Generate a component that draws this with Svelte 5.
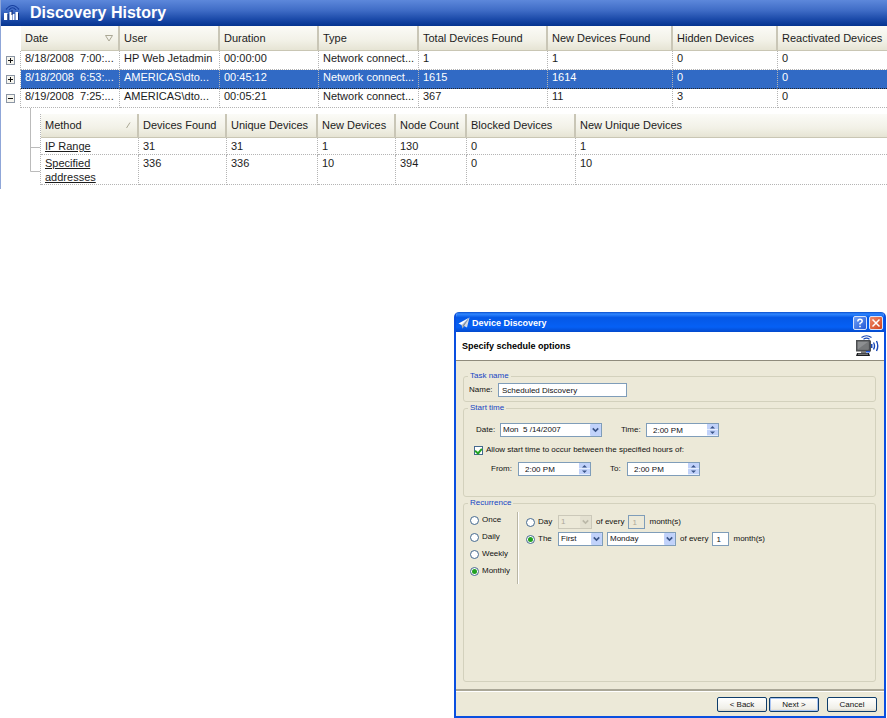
<script lang="ts">
	const columns = [
		{ label: "Date", width: 99, sort: "desc" },
		{ label: "User", width: 100 },
		{ label: "Duration", width: 99 },
		{ label: "Type", width: 100 },
		{ label: "Total Devices Found", width: 129 },
		{ label: "New Devices Found", width: 125 },
		{ label: "Hidden Devices", width: 105 },
		{ label: "Reactivated Devices" },
	];

	const runs = [
		["8/18/2008\u00a0 7:00:...", "HP Web Jetadmin", "00:00:00", "Network connect...", "1", "1", "0", "0"],
		["8/18/2008\u00a0 6:53:...", "AMERICAS\\dto...", "00:45:12", "Network connect...", "1615", "1614", "0", "0"],
		["8/19/2008\u00a0 7:25:...", "AMERICAS\\dto...", "00:05:21", "Network connect...", "367", "11", "3", "0"],
	];

	const methodColumns = [
		{ label: "Method", width: 98, sort: "asc" },
		{ label: "Devices Found", width: 88 },
		{ label: "Unique Devices", width: 91 },
		{ label: "New Devices", width: 78 },
		{ label: "Node Count", width: 71 },
		{ label: "Blocked Devices", width: 109 },
		{ label: "New Unique Devices" },
	];

	const methods = [
		["IP Range", "31", "31", "1", "130", "0", "1"],
		["Specified addresses", "336", "336", "10", "394", "0", "10"],
	];

	let selected = $state(1);
	let expanded = $state(2);

	let taskName = $state("Scheduled Discovery");
	let useWindow = $state(true);
	let recurrence = $state("Monthly");
	let monthlyMode = $state("the");
</script>

{#snippet chevron()}
	<svg class="chevron" viewBox="0 0 10 11" aria-hidden="true">
		<rect width="10" height="11" rx="1" />
		<path d="M2.5 4 L5 6.5 L7.5 4" />
	</svg>
{/snippet}

{#snippet timeBox(id, value)}
	<span class="spin">
		<input {id} type="text" {value} />
		<span class="steps">
			<button type="button" aria-label="Up">
				<svg viewBox="0 0 11 6"><path d="M3 4.5 L5.5 2 L8 4.5 Z" /></svg>
			</button>
			<button type="button" aria-label="Down">
				<svg viewBox="0 0 11 6"><path d="M3 1.5 L5.5 4 L8 1.5 Z" /></svg>
			</button>
		</span>
	</span>
{/snippet}

<main>
	<section class="history">
		<header>
			<svg class="logo" viewBox="0 0 18 20" aria-hidden="true">
				<path d="M3 6.5 Q9.500 -1.500 16 6.5 M6 7 Q9.500 2.500 13 7" fill="none" stroke="#173f9f" stroke-width="1.2" />
				<path d="M1 10 h3.5 v7 h-3.5 Z M6.5 9 h2.5 v8 h-2.5 Z M9.500 11 h2 v6 h-2 Z M12.500 9 h2.500 v8 h-2.500 Z" fill="#fff" />
				<path d="M4.5 11 h1 v6 h-1 Z M15 10 h1 v7 h-1 Z M8.500 7 h1 v5 h-1 Z" fill="#10296b" />
			</svg>
			<h1>Discovery History</h1>
		</header>

		<table class="grid">
			<colgroup>
				<col style="width: 20px" />
				{#each columns as col}
					<col style={col.width ? `width: ${col.width}px` : ""} />
				{/each}
			</colgroup>
			<thead>
				<tr>
					<td class="gutter"></td>
					{#each columns as col}
						<th scope="col">
							<div>
								{col.label}
								{#if col.sort}
									<svg class="sort" viewBox="0 0 8 7"><path d="M.5 .5 H7.5 L4 6 Z" /></svg>
								{/if}
							</div>
						</th>
					{/each}
				</tr>
			</thead>
			<tbody>
				{#each runs as run, i}
					<tr class:selected={selected === i} onclick={() => (selected = i)}>
						<td class="gutter">
							<button
								type="button"
								class="toggle"
								aria-label={expanded === i ? "Collapse" : "Expand"}
								onclick={() => (expanded = expanded === i ? -1 : i)}
							>
								<svg viewBox="0 0 9 9">
									<path d="M2 4.5 H7" />
									{#if expanded !== i}<path d="M4.5 2 V7" />{/if}
								</svg>
							</button>
						</td>
						{#each run as cell}
							<td>{cell}</td>
						{/each}
					</tr>
					{#if expanded === i}
						<tr class="detail">
							<td class="gutter"></td>
							<td colspan={columns.length}>
								<div class="branch">
									<svg class="tree" viewBox="0 0 19 76" aria-hidden="true">
										<path d="M9.5 0 V63.5 H19 M9.5 39.5 H19" />
									</svg>
									<table class="grid nested">
										<colgroup>
											{#each methodColumns as col}
												<col style={col.width ? `width: ${col.width}px` : ""} />
											{/each}
										</colgroup>
										<thead>
											<tr>
												{#each methodColumns as col}
													<th scope="col">
														<div>
															{col.label}
															{#if col.sort}
																<svg class="sort" viewBox="0 0 8 7"><path d="M2.5 6 L6 .5" /></svg>
															{/if}
														</div>
													</th>
												{/each}
											</tr>
										</thead>
										<tbody>
											{#each methods as method}
												<tr>
													{#each method as cell, n}
														<td>
															{#if n === 0}<a href="#method">{cell}</a>{:else}{cell}{/if}
														</td>
													{/each}
												</tr>
											{/each}
										</tbody>
									</table>
								</div>
							</td>
						</tr>
					{/if}
				{/each}
			</tbody>
		</table>
	</section>

	<form class="dialog" onsubmit={(e) => e.preventDefault()}>
		<div class="titlebar">
			<svg class="plane" viewBox="0 0 12 12" aria-hidden="true">
				<path d="M11.5 .5 L.5 6.5 L3.5 8 Z" fill="#fff" />
				<path d="M11.5 .5 L3.5 8 L4.5 11.5 L6 9 L9 10.5 Z" fill="#d5dce6" />
				<path d="M11.5 .5 L4.5 8.5 L4.5 11.5 L6 9 Z" fill="#7c8794" />
			</svg>
			<h2>Device Discovery</h2>
			<button type="button" class="caption" aria-label="Help">
				<svg viewBox="0 0 12 12">
					<path d="M3.8 4.5 Q3.8 2.2 6 2.2 Q8.2 2.2 8.2 4.2 Q8.2 5.4 6 6.4 V7.6 M6 8.8 V10.3" />
				</svg>
			</button>
			<button type="button" class="caption close" aria-label="Close">
				<svg viewBox="0 0 12 12"><path d="M2.5 2.5 L9.5 9.5 M9.5 2.5 L2.5 9.5" /></svg>
			</button>
		</div>

		<div class="banner">
			<h3>Specify schedule options</h3>
			<svg class="monitor" viewBox="0 0 24 22" aria-hidden="true">
				<path d="M6.5 2.5 Q11.5 -1 16.500 2.5 M8.500 4.200 Q11.500 2.200 14.500 4.200" fill="none" stroke="#1747b8" stroke-width="1.2" />
				<path d="M1 5 H15 L16 6 V16.5 H1 Z" fill="#4c4e51" />
				<rect x="2.5" y="6.5" width="11" height="8" fill="#8d8f91" />
				<path d="M2.5 14.5 L13.500 6.500 V14.5 Z" fill="#77797b" />
				<path d="M6 16 H11 V18 H6 Z" fill="#777" />
				<path d="M2 18 H14 L15 21 H1 Z" fill="#1d1f22" />
				<path d="M3 19.2 H13" stroke="#bbb" stroke-width=".8" />
				<rect x="11" y="16" width="4" height="1.5" fill="#1d56dc" />
				<path d="M16 9 H17.5 V13 H16 Z" fill="#1747b8" />
				<path d="M18.500 7.500 Q20.500 11 18.500 14.500 M21.500 6 Q24 11 21.500 16" fill="none" stroke="#1747b8" stroke-width="1.400" />
			</svg>
		</div>

		<div class="body">
			<fieldset class="task">
				<legend>Task name</legend>
				<div class="row">
					<label class="name-label" for="task-name">Name:</label>
					<input id="task-name" class="name" type="text" bind:value={taskName} />
				</div>
			</fieldset>

			<fieldset class="start">
				<legend>Start time</legend>
				<div class="row date-row">
					<label class="lead" for="date">Date:</label>
					<span class="drop date">
						<select id="date"><option>Mon&nbsp; 5 /14/2007</option></select>
						{@render chevron()}
					</span>
					<label class="time-label" for="time">Time:</label>
					{@render timeBox("time", "2:00 PM")}
				</div>
				<label class="row window-row">
					<input type="checkbox" bind:checked={useWindow} />
					Allow start time to occur between the specified hours of:
				</label>
				<div class="row hours-row">
					<label class="from-label" for="from">From:</label>
					{@render timeBox("from", "2:00 PM")}
					<label class="to-label" for="to">To:</label>
					{@render timeBox("to", "2:00 PM")}
				</div>
			</fieldset>

			<fieldset class="recurrence">
				<legend>Recurrence</legend>
				<div class="split">
					<div class="modes">
						{#each ["Once", "Daily", "Weekly", "Monthly"] as mode}
							<label>
								<input type="radio" name="recurrence" value={mode} bind:group={recurrence} />
								{mode}
							</label>
						{/each}
					</div>
					<div class="monthly">
						<div class="row">
							<label class="pick">
								<input type="radio" name="monthly" value="day" bind:group={monthlyMode} />
								Day
							</label>
							<span class="drop day" class:off={monthlyMode !== "day"}>
								<select aria-label="Day of month" disabled={monthlyMode !== "day"}><option>1</option></select>
								{@render chevron()}
							</span>
							<label for="day-every">of every</label>
							<input id="day-every" class="count" type="text" value="1" disabled={monthlyMode !== "day"} />
							<span>month(s)</span>
						</div>
						<div class="row">
							<label class="pick">
								<input type="radio" name="monthly" value="the" bind:group={monthlyMode} />
								The
							</label>
							<span class="drop ordinal">
								<select aria-label="Week"><option>First</option></select>
								{@render chevron()}
							</span>
							<span class="drop weekday">
								<select aria-label="Weekday"><option>Monday</option></select>
								{@render chevron()}
							</span>
							<label for="the-every">of every</label>
							<input id="the-every" class="count" type="text" value="1" />
							<span>month(s)</span>
						</div>
					</div>
				</div>
			</fieldset>
		</div>

		<footer>
			<button type="button">&lt; Back</button>
			<button type="submit" class="default">Next &gt;</button>
			<button type="button" class="cancel">Cancel</button>
		</footer>
	</form>
</main>

<style>
	:global(body) {
		margin: 0;
		background: #fff;
	}

	main {
		display: flex;
		flex-direction: column;
		gap: 123px;
		font-family: "Liberation Sans", Arial, sans-serif;
		font-size: 11px;
		color: #1c1c1c;
	}

	main * {
		box-sizing: border-box;
	}

	h1,
	h2,
	h3 {
		margin: 0;
	}

	button,
	input,
	select {
		margin: 0;
		padding: 0;
		font: inherit;
		color: inherit;
	}

	svg {
		display: block;
	}

	/* History grid */
	.history {
		border-left: 1px solid #8fa6d8;
		padding-bottom: 4px;
		overflow: hidden;
	}

	.history header {
		display: flex;
		align-items: center;
		gap: 9px;
		height: 26px;
		padding-left: 2px;
		background: linear-gradient(#5d88db, #3f6cc6 40%, #1a49a8 75%, #04338f);
	}

	.logo {
		width: 18px;
		height: 20px;
	}

	h1 {
		font-size: 16px;
		line-height: 26px;
		color: #fff;
	}

	.grid {
		width: 100%;
		table-layout: fixed;
		border-collapse: separate;
		border-spacing: 0;
	}

	.grid th {
		height: 25px;
		padding: 0 5px 0 4px;
		font-weight: normal;
		text-align: left;
		white-space: nowrap;
		background: linear-gradient(#fbfbf7, #f2f1e7 60%, #e6e4d4);
		border-right: 2px solid #c9c6b6;
		border-bottom: 1px solid #c9c6b4;
	}

	.grid th:last-child {
		border-right: 0;
	}

	.grid th > div {
		display: flex;
		align-items: center;
		justify-content: space-between;
	}

	.sort {
		width: 8px;
		height: 7px;
		fill: none;
		stroke: #aaa794;
	}

	.grid td {
		height: 19px;
		padding: 0 0 0 4px;
		line-height: 15px;
		vertical-align: top;
		white-space: nowrap;
		overflow: hidden;
		border-right: 1px dotted #b4b4b4;
		border-bottom: 1px dotted #b4b4b4;
	}

	.grid td:last-child {
		border-right: 0;
	}

	.grid td.gutter {
		padding: 5px 0 0 5px;
		border-bottom: 0;
	}

	.grid thead td.gutter {
		border-right: 0;
	}

	.selected td:not(.gutter) {
		color: #fff;
		background: #316ac5;
		border-bottom-color: #222;
	}

	.toggle {
		display: block;
		width: 9px;
		height: 9px;
		border: 1px solid #8c96a5;
		background: #f6f5ee;
	}

	.toggle svg {
		width: 9px;
		height: 9px;
		margin: -1px;
		stroke: #111;
	}

	.grid .detail > td {
		padding: 0;
		border: 0;
	}

	.branch {
		display: flex;
	}

	.tree {
		flex: none;
		width: 19px;
		height: 76px;
		fill: none;
		stroke: #bbb;
	}

	.nested {
		flex: 1;
		margin-top: 6px;
		border-left: 1px dotted #b4b4b4;
	}

	.nested th {
		height: 24px;
	}

	.nested td {
		height: 17px;
		padding-top: 1px;
		line-height: 14px;
		white-space: normal;
	}

	.nested a {
		color: #1c1c1c;
	}

	/* Wizard dialog */
	.dialog {
		display: flex;
		flex-direction: column;
		margin: 0 1px 0 454px;
		border: solid #0a4fe0;
		border-width: 0 2px 2px;
		border-radius: 5px 5px 0 0;
		font-size: 8px;
		line-height: 10px;
		color: #111;
		background: #ece9d8;
		overflow: hidden;
	}

	.titlebar {
		display: flex;
		align-items: center;
		gap: 2px;
		height: 20px;
		padding: 1px 1px 0 2px;
		background: linear-gradient(#0a4ecb, #2f86ff 10%, #0558e6 28%, #0560f5 75%, #0349cd);
	}

	.plane {
		width: 12px;
		height: 12px;
	}

	h2 {
		flex: 1;
		font-size: 9px;
		color: #fff;
	}

	.caption {
		width: 14px;
		height: 14px;
		border: 1px solid #d9e4fa;
		border-radius: 2px;
		background: linear-gradient(135deg, #6f9ff5, #2358d6);
	}

	.caption.close {
		background: linear-gradient(135deg, #ef8a6a, #d2431c);
	}

	.caption svg {
		width: 12px;
		height: 12px;
		fill: none;
		stroke: #fff;
		stroke-width: 1.5;
	}

	.banner {
		display: flex;
		align-items: center;
		justify-content: space-between;
		height: 29px;
		padding: 0 5px 0 6px;
		background: #fff;
		border-bottom: 1px solid #8f8b7c;
	}

	h3 {
		font-size: 9px;
		color: #000;
	}

	.monitor {
		width: 24px;
		height: 22px;
	}

	.body {
		display: flex;
		flex-direction: column;
		gap: 1px;
		padding: 10px 8px 7px 7px;
	}

	fieldset {
		min-width: 0;
		margin: 0;
		padding: 0;
		border: 1px solid #d3d1bd;
		border-radius: 3px;
	}

	legend {
		margin-left: 4px;
		padding: 0 2px;
		color: #1545c4;
	}

	.row {
		display: flex;
		align-items: center;
	}

	.task {
		min-height: 31px;
	}

	.task .row {
		padding: 2px 0 3px 5px;
	}

	.name-label {
		width: 29px;
	}

	.dialog input[type="text"] {
		height: 14px;
		padding: 0 3px;
		border: 1px solid #7f9db9;
		background: #fff;
	}

	.dialog input.name {
		width: 129px;
	}

	.start {
		min-height: 94px;
	}

	.date-row {
		padding: 10px 0 0 12px;
	}

	.lead {
		width: 24px;
	}

	.time-label {
		width: 25px;
		margin-left: 19px;
	}

	.window-row {
		gap: 3px;
		padding: 8px 0 0 10px;
	}

	.hours-row {
		padding: 7px 0 0 27px;
	}

	.from-label {
		width: 27px;
	}

	.to-label {
		width: 17px;
		margin-left: 19px;
	}

	.drop {
		position: relative;
		display: block;
	}

	.drop select {
		display: block;
		width: 100%;
		height: 14px;
		padding: 0 12px 0 2px;
		appearance: none;
		border: 1px solid #7f9db9;
		border-radius: 0;
		background: #fff;
		opacity: 1;
	}

	.chevron {
		position: absolute;
		top: 1px;
		right: 1px;
		width: 11px;
		height: 12px;
		pointer-events: none;
	}

	.chevron rect {
		fill: #c1d2fa;
	}

	.chevron path {
		fill: none;
		stroke: #3a5488;
		stroke-width: 1.5;
	}

	.off select {
		color: #aca899;
		background: #ece9d8;
		border-color: #cbc8b9;
	}

	.off .chevron rect {
		fill: #e3e0d0;
	}

	.off .chevron path {
		stroke: #bbb8a8;
	}

	.date {
		width: 102px;
	}

	.spin {
		display: flex;
		width: 73px;
		height: 14px;
		border: 1px solid #7f9db9;
		background: #fff;
	}

	.dialog .spin input {
		flex: 1;
		min-width: 0;
		height: 12px;
		padding-left: 6px;
		border: 0;
	}

	.steps {
		display: flex;
		flex-direction: column;
		width: 11px;
	}

	.steps button {
		width: 11px;
		height: 6px;
		border: 0;
		background: #c1d2fa;
		border-bottom: 1px solid #e6eefd;
	}

	.steps svg {
		width: 11px;
		height: 6px;
		fill: #3a5488;
	}

	input[type="checkbox"],
	input[type="radio"] {
		display: grid;
		place-items: center;
		flex: none;
		width: 9px;
		height: 9px;
		appearance: none;
		border: 1px solid #45698f;
		background: #fff;
	}

	input[type="radio"] {
		border-radius: 50%;
	}

	input[type="checkbox"]:checked::before {
		content: "";
		width: 3px;
		height: 5px;
		margin-bottom: 1px;
		border: solid #21a121;
		border-width: 0 2px 2px 0;
		transform: rotate(40deg);
	}

	input[type="radio"]:checked::before {
		content: "";
		width: 5px;
		height: 5px;
		border-radius: 50%;
		background: #21a121;
	}

	.recurrence {
		min-height: 184px;
	}

	.split {
		display: flex;
		padding: 4px 0 0 6px;
	}

	.modes {
		display: flex;
		flex-direction: column;
		gap: 7px;
		width: 48px;
		height: 72px;
		padding-top: 3px;
		border-right: 1px solid #b9b6a4;
		box-shadow: 1px 0 #fff;
	}

	.modes label,
	.pick {
		display: flex;
		align-items: center;
		gap: 3px;
	}

	.monthly {
		display: flex;
		flex-direction: column;
		gap: 3px;
		padding: 3px 0 0 8px;
	}

	.monthly .row {
		gap: 4px;
	}

	.pick {
		width: 28px;
	}

	.day {
		width: 34px;
	}

	.ordinal {
		width: 45px;
	}

	.weekday {
		width: 69px;
	}

	.dialog input.count {
		width: 17px;
	}

	.dialog input.count:disabled {
		color: #aca899;
		background: #ece9d8;
	}

	footer {
		display: flex;
		justify-content: flex-end;
		gap: 2px;
		padding: 6px 7px 4px;
		border-top: 2px solid #aaa797;
		box-shadow: inset 0 1px #fff;
	}

	footer button {
		width: 50px;
		height: 15px;
		border: 1px solid #0f3d6b;
		border-radius: 2px;
		background: linear-gradient(#fff, #f0efe8 80%, #dcd8cb);
	}

	footer .default {
		box-shadow: inset 0 0 0 1px #a9c4f2;
	}

	footer .cancel {
		margin-left: 6px;
	}
</style>
